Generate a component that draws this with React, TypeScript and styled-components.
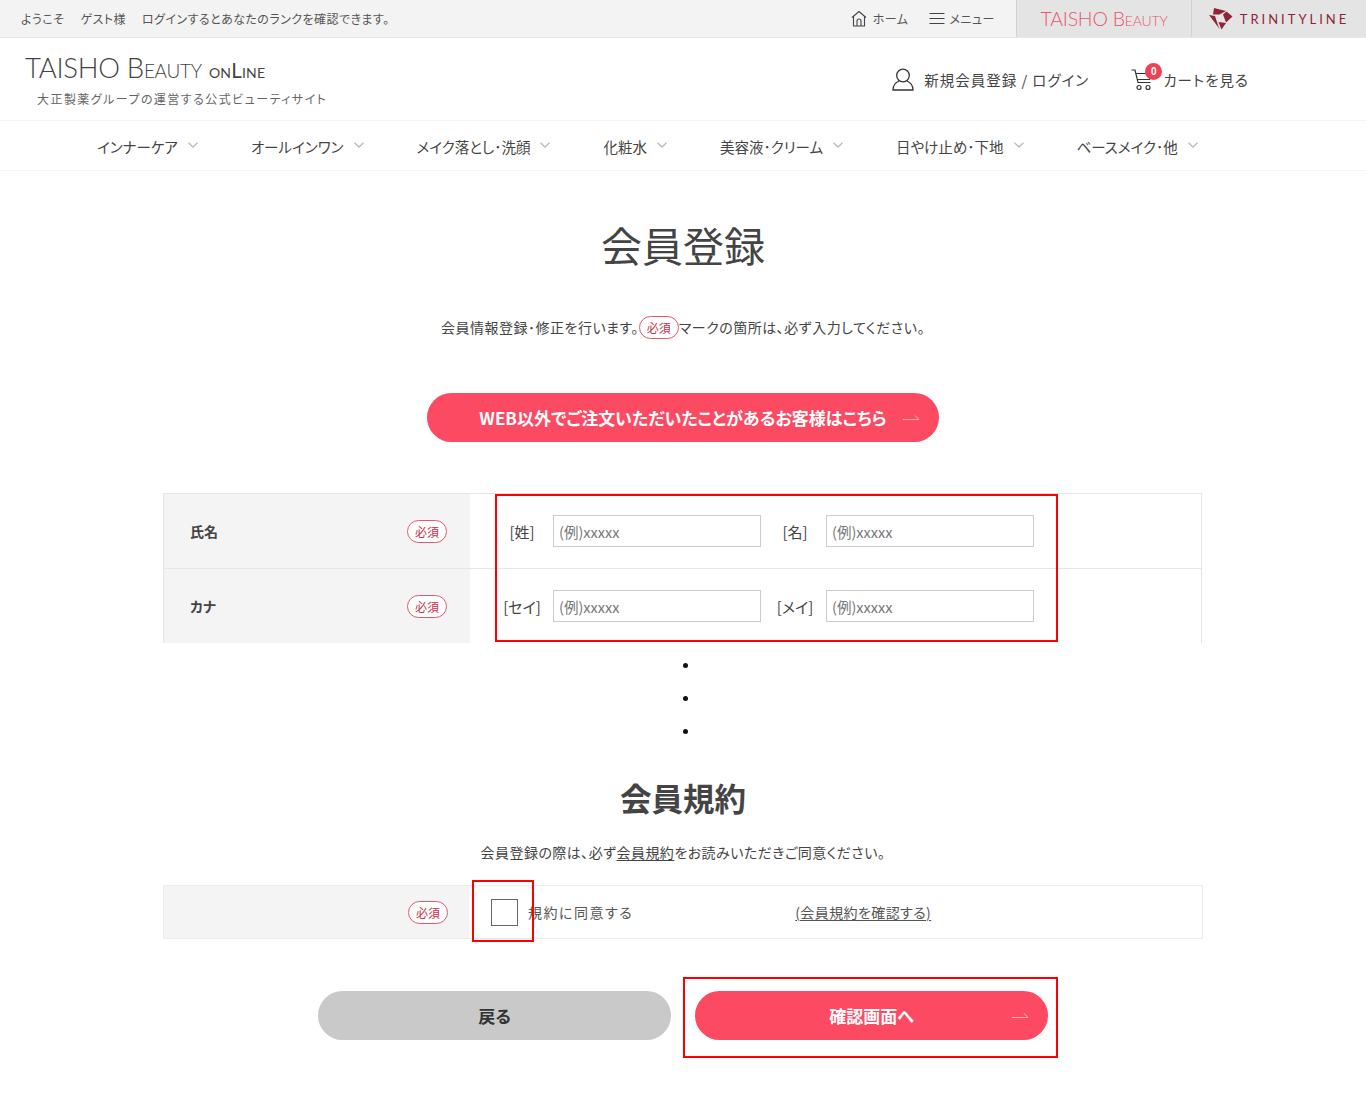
import styled, { createGlobalStyle } from 'styled-components';

const GlobalStyle = createGlobalStyle`
  html, body {
    margin: 0;
    padding: 0;
    background: #fff;
  }
  body {
    font-family: "Noto Sans CJK JP", "Noto Sans", sans-serif;
    font-feature-settings: "palt";
    color: #333;
  }
`;

const Page = styled.div`
  position: relative;
  width: 1366px;
  height: 1096px;
  overflow: hidden;
`;

const TopBar = styled.div`
  display: flex;
  align-items: stretch;
  height: 37px;
  background: #f3f3f3;
  border-bottom: 1px solid #e8e8e8;
`;

const Welcome = styled.div`
  display: flex;
  align-items: center;
  gap: 16px;
  flex: 1;
  padding-left: 21px;
  font-size: 12px;
  letter-spacing: 0.45px;
  color: #555;
`;

const TopLink = styled.div<{ $gap: number }>`
  display: flex;
  align-items: center;
  gap: ${({ $gap }) => $gap}px;
  margin-right: 21px;
  font-size: 12px;
  letter-spacing: 0.5px;
  color: #555;
  svg {
    color: #444;
  }
`;

const BrandTab = styled.div<{ $width: number }>`
  display: flex;
  align-items: center;
  justify-content: center;
  gap: 7px;
  width: ${({ $width }) => $width}px;
  background: #e4e4e4;
  border-left: 1px solid #d2d2d2;
  box-sizing: border-box;
`;

const TaishoTab = styled.span`
  font-family: Lato, sans-serif;
  font-weight: 300;
  font-size: 19.5px;
  font-variant: small-caps;
  color: #e8566f;
  letter-spacing: -0.2px;
`;

const TrinityTab = styled.span`
  font-family: Lato, sans-serif;
  font-size: 13px;
  letter-spacing: 3px;
  color: #8d2438;
`;

const Header = styled.header`
  display: flex;
  justify-content: space-between;
  height: 82px;
  border-bottom: 1px solid #f4f4f4;
`;

const LogoBlock = styled.div`
  display: flex;
  flex-direction: column;
  padding: 13px 0 0 25px;
`;

const LogoText = styled.div`
  font-family: Lato, sans-serif;
  font-weight: 300;
  font-size: 27.5px;
  line-height: 34px;
  font-variant: small-caps;
  color: #444;
  letter-spacing: -0.3px;
  white-space: nowrap;
`;

const LogoOnline = styled.span`
  font-size: 20.5px;
  font-weight: 400;
  letter-spacing: 0.2px;
`;

const Tagline = styled.div`
  margin: 3px 0 0 12px;
  font-size: 12px;
  line-height: 18px;
  letter-spacing: 1.45px;
  color: #666;
`;

const HeaderActions = styled.div`
  display: flex;
  align-items: center;
  gap: 42px;
  padding: 0 117px 0 0;
  font-size: 14.5px;
  color: #444;
`;

const HeaderAction = styled.div`
  position: relative;
  display: flex;
  align-items: center;
  letter-spacing: 1px;
`;

const UserGlyph = styled.svg`
  margin-right: 10px;
`;

const CartGlyph = styled.svg`
  margin: 2px 10px 0 0;
`;

const CartBadge = styled.span`
  position: absolute;
  left: 14px;
  top: -4px;
  width: 17px;
  height: 17px;
  border-radius: 50%;
  background: #f04058;
  color: #fff;
  font-family: "Liberation Sans", sans-serif;
  font-size: 10px;
  font-weight: 700;
  line-height: 17px;
  letter-spacing: 0;
  text-align: center;
`;

const Nav = styled.nav`
  display: flex;
  gap: 53px;
  box-sizing: border-box;
  height: 50px;
  padding: 2px 0 0 97px;
  align-items: center;
  border-bottom: 1px solid #f4f4f4;
`;

const NavItem = styled.div`
  display: flex;
  align-items: center;
  gap: 10px;
  font-size: 14.5px;
  color: #444;
`;

const NavChevron = styled.svg`
  margin-top: -3px;
`;

const Main = styled.main`
  display: flex;
  flex-direction: column;
  align-items: center;
`;

const Title = styled.h1`
  margin: 45px 0 0;
  font-size: 41px;
  line-height: 56px;
  font-weight: 400;
  color: #444;
`;

const Lead = styled.p`
  display: flex;
  align-items: center;
  height: 24px;
  margin: 43px 0 0;
  font-size: 14px;
  letter-spacing: 0.5px;
  color: #444;
`;

const Required = styled.span`
  display: inline-flex;
  align-items: center;
  justify-content: center;
  flex: none;
  box-sizing: border-box;
  width: 40px;
  height: 23px;
  border: 1px solid #dd5a70;
  border-radius: 12px;
  background: #fff;
  color: #c9304b;
  font-size: 12px;
  font-weight: 400;
  letter-spacing: 0;
`;

const PillButton = styled.div<{ $width: number; $muted?: boolean }>`
  position: relative;
  display: flex;
  align-items: center;
  justify-content: center;
  flex: none;
  width: ${({ $width }) => $width}px;
  height: 49px;
  border-radius: 25px;
  background: ${({ $muted }) => ($muted ? '#c9c9c9' : '#fc4a63')};
  color: ${({ $muted }) => ($muted ? '#333' : '#fff')};
  font-size: 17px;
  font-weight: 700;
`;

const WebButton = styled(PillButton)`
  margin-top: 54px;
`;

const Arrow = styled.svg`
  position: absolute;
  right: 19px;
  top: 21px;
`;

const FormTable = styled.div`
  box-sizing: border-box;
  width: 1039px;
  margin: 51px 1px 0 0;
  border: 1px solid #e6e6e6;
  border-bottom: 0;
`;

const FormRow = styled.div`
  display: flex;
  height: 74px;
  & + & {
    border-top: 1px solid #e6e6e6;
  }
`;

const LabelCell = styled.div`
  display: flex;
  align-items: center;
  justify-content: space-between;
  box-sizing: border-box;
  width: 306px;
  padding: 0 23px 0 26px;
  background: #f4f4f4;
  font-size: 14px;
  font-weight: 700;
  color: #444;
`;

const FieldCell = styled.div`
  display: flex;
  align-items: center;
  gap: 12px;
  padding-left: 27px;
`;

const FieldLabel = styled.span<{ $offset: number }>`
  width: 44px;
  margin: 0 -3px 0 ${({ $offset }) => $offset}px;
  text-align: center;
  font-size: 15px;
  color: #444;
  white-space: nowrap;
`;

const TextBox = styled.div`
  display: flex;
  align-items: center;
  box-sizing: border-box;
  width: 208px;
  height: 32px;
  padding-left: 5px;
  border: 1px solid #ccc;
  color: #777;
  font-size: 14.5px;
`;

const Dots = styled.div`
  display: flex;
  flex-direction: column;
  gap: 28px;
  margin: 20px 0 0 5px;
`;

const Dot = styled.span`
  width: 5px;
  height: 5px;
  border-radius: 50%;
  background: #111;
`;

const SectionTitle = styled.h2`
  margin: 40px 0 0;
  font-size: 31.5px;
  line-height: 46px;
  font-weight: 700;
  color: #444;
`;

const TermsLead = styled.p`
  margin: 22px 0 0;
  font-size: 14px;
  line-height: 20px;
  letter-spacing: 0.45px;
  color: #444;
  u {
    text-underline-offset: 2px;
  }
`;

const TermsTable = styled.div`
  display: flex;
  box-sizing: border-box;
  width: 1040px;
  height: 54px;
  margin: 23px 0 0;
  border: 1px solid #ececec;
`;

const TermsLabel = styled.div`
  display: flex;
  align-items: center;
  justify-content: flex-end;
  box-sizing: border-box;
  width: 306px;
  padding-right: 22px;
  background: #f4f4f4;
`;

const TermsBody = styled.div`
  display: flex;
  align-items: center;
  flex: 1;
  padding-left: 21px;
  font-size: 14px;
  color: #555;
`;

const CheckBox = styled.span`
  flex: none;
  box-sizing: border-box;
  width: 27px;
  height: 27px;
  margin-right: 10px;
  border: 1px solid #666;
  background: #fff;
`;

const AgreeText = styled.span`
  letter-spacing: 1.5px;
`;

const TermsLink = styled.u`
  margin-left: 162px;
  letter-spacing: 0.4px;
  text-underline-offset: 2px;
`;

const ButtonRow = styled.div`
  display: flex;
  gap: 24px;
  margin: 52px 0 0;
`;

const Marker = styled.div<{ $x: number; $y: number; $w: number; $h: number }>`
  position: absolute;
  left: ${({ $x }) => $x}px;
  top: ${({ $y }) => $y}px;
  width: ${({ $w }) => $w}px;
  height: ${({ $h }) => $h}px;
  box-sizing: border-box;
  border: 2px solid #f00;
  pointer-events: none;
`;

const navItems = [
  'インナーケア',
  'オールインワン',
  'メイク落とし･洗顔',
  '化粧水',
  '美容液･クリーム',
  '日やけ止め･下地',
  'ベースメイク･他',
];

const rows = [
  { label: '氏名', first: '[姓]', second: '[名]' },
  { label: 'カナ', first: '[セイ]', second: '[メイ]' },
];

const ArrowIcon = () => (
  <Arrow width="18" height="8" viewBox="0 0 18 8" fill="none" stroke="#ffb3be" strokeWidth="1">
    <path d="M1 5.5h16L13 1.5" />
  </Arrow>
);

const HomeIcon = () => (
  <svg width="16" height="17" viewBox="0 0 16 17" fill="none" stroke="currentColor" strokeWidth="1.1">
    <path d="M1 7.5 8 1.5l7 6M2.5 6.5v9.5h11V6.5" />
    <path d="M6 16v-5a2 2 0 0 1 4 0v5" />
  </svg>
);

const MenuIcon = () => (
  <svg width="16" height="13" viewBox="0 0 16 13" fill="none" stroke="currentColor" strokeWidth="1">
    <path d="M0.5 1.5h15M0.5 6.5h15M0.5 11.5h15" />
  </svg>
);

const TrinityMark = () => (
  <svg width="24" height="22" viewBox="0 0 24 22" fill="#8d2438">
    <path d="M5 0 17 3 10.5 6.5 4 6.5z" />
    <path d="M17.5 3.5 23.5 8.5 17 14.5 14 6.5z" />
    <path d="M17 15 12.5 21.5 9.5 14z" />
    <path d="M0 7 6 8 9.5 18.5 11 21.5z" />
  </svg>
);

const UserIcon = () => (
  <UserGlyph width="22" height="23" viewBox="0 0 22 23" fill="none" stroke="#333" strokeWidth="1.3">
    <circle cx="11" cy="7.5" r="6.3" />
    <path d="M7 13C3.5 14.5 1 17 1 22h20c0-5-2.500-7.500-6-9" />
  </UserGlyph>
);

const CartIcon = () => (
  <CartGlyph width="22" height="22" viewBox="0 0 22 22" fill="none" stroke="#333" strokeWidth="1.2">
    <path d="M0.500 1H4l3 12.500h12.500" />
    <path d="M4.800 4.500H20l-1.500 6H6.300" />
    <circle cx="8" cy="18.500" r="2" />
    <circle cx="17" cy="18.500" r="2" />
  </CartGlyph>
);

const ChevronIcon = () => (
  <NavChevron width="10" height="6" viewBox="0 0 10 6" fill="none" stroke="#bbb" strokeWidth="1.3">
    <path d="M0.500 0.700 5 5 9.500 0.700" />
  </NavChevron>
);

export default function App() {
  return (
    <Page>
      <GlobalStyle />
      <TopBar>
        <Welcome>
          <span>ようこそ</span>
          <span>ゲスト様</span>
          <span>ログインするとあなたのランクを確認できます。</span>
        </Welcome>
        <TopLink $gap={6}>
          <HomeIcon />
          ホーム
        </TopLink>
        <TopLink $gap={4}>
          <MenuIcon />
          メニュー
        </TopLink>
        <BrandTab $width={175}>
          <TaishoTab>TAISHO Beauty</TaishoTab>
        </BrandTab>
        <BrandTab $width={175}>
          <TrinityMark />
          <TrinityTab>TRINITYLINE</TrinityTab>
        </BrandTab>
      </TopBar>
      <Header>
        <LogoBlock>
          <LogoText>
            TAISHO Beauty <LogoOnline>onLine</LogoOnline>
          </LogoText>
          <Tagline>大正製薬グループの運営する公式ビューティサイト</Tagline>
        </LogoBlock>
        <HeaderActions>
          <HeaderAction>
            <UserIcon />
            新規会員登録 / ログイン
          </HeaderAction>
          <HeaderAction>
            <CartIcon />
            <CartBadge>0</CartBadge>
            カートを見る
          </HeaderAction>
        </HeaderActions>
      </Header>
      <Nav>
        {navItems.map((item) => (
          <NavItem key={item}>
            {item}
            <ChevronIcon />
          </NavItem>
        ))}
      </Nav>
      <Main>
        <Title>会員登録</Title>
        <Lead>
          会員情報登録･修正を行います。<Required>必須</Required>マークの箇所は、必ず入力してください。
        </Lead>
        <WebButton $width={512}>
          WEB以外でご注文いただいたことがあるお客様はこちら
          <ArrowIcon />
        </WebButton>
        <FormTable>
          {rows.map((row) => (
            <FormRow key={row.label}>
              <LabelCell>
                {row.label}
                <Required>必須</Required>
              </LabelCell>
              <FieldCell>
                <FieldLabel $offset={3}>{row.first}</FieldLabel>
                <TextBox>(例)xxxxx</TextBox>
                <FieldLabel $offset={0}>{row.second}</FieldLabel>
                <TextBox>(例)xxxxx</TextBox>
              </FieldCell>
            </FormRow>
          ))}
        </FormTable>
        <Dots>
          <Dot />
          <Dot />
          <Dot />
        </Dots>
        <SectionTitle>会員規約</SectionTitle>
        <TermsLead>
          会員登録の際は、必ず<u>会員規約</u>をお読みいただきご同意ください。
        </TermsLead>
        <TermsTable>
          <TermsLabel>
            <Required>必須</Required>
          </TermsLabel>
          <TermsBody>
            <CheckBox />
            <AgreeText>規約に同意する</AgreeText>
            <TermsLink>(会員規約を確認する)</TermsLink>
          </TermsBody>
        </TermsTable>
        <ButtonRow>
          <PillButton $width={353} $muted>
            戻る
          </PillButton>
          <PillButton $width={353}>
            確認画面へ
            <ArrowIcon />
          </PillButton>
        </ButtonRow>
      </Main>
      <Marker $x={495} $y={494} $w={563} $h={148} />
      <Marker $x={472} $y={880} $w={62} $h={62} />
      <Marker $x={683} $y={977} $w={375} $h={81} />
    </Page>
  );
}
